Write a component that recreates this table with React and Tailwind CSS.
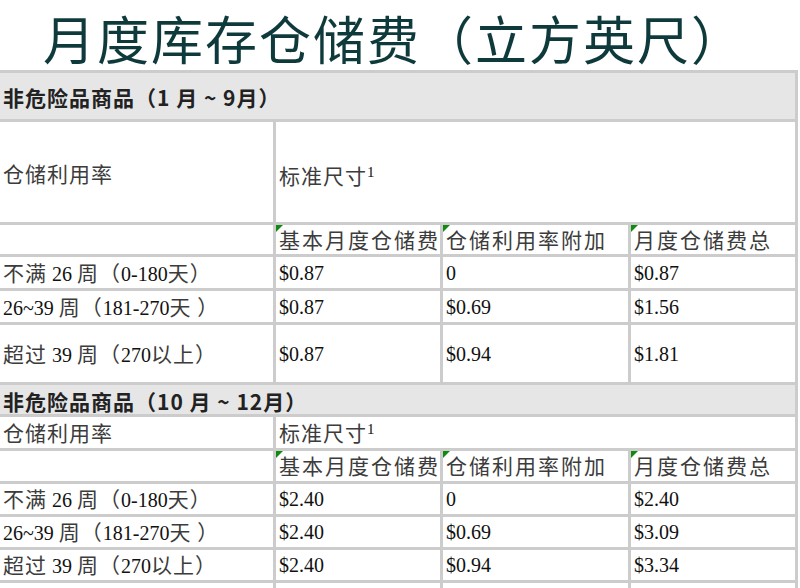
import React from "react";

const serif = { fontFamily: '"Liberation Serif", "Noto Sans CJK SC", serif' };

function C({ children, className = "" }) {
  return (
    <span
      className={"text-[21px] tracking-[1px] text-[#3c3c3c] " + className}
      style={{ fontFamily: '"Noto Sans CJK SC", sans-serif' }}
    >
      {children}
    </span>
  );
}

function Cell({ children, className = "", tri = false }) {
  return (
    <div
      className={
        "relative flex items-center bg-white pl-[3px] text-[20px] leading-none text-[#111] " +
        className
      }
      style={serif}
    >
      {tri && (
        <span className="absolute left-0 top-0 h-0 w-0 border-r-[7px] border-t-[7px] border-r-transparent border-t-[#118a11]" />
      )}
      <div className="whitespace-nowrap">{children}</div>
    </div>
  );
}

function Header({ children }) {
  return (
    <div
      className="col-span-4 flex items-center bg-[#e6e6e6] pl-[3px] pt-[3px] text-[21px] font-bold leading-none tracking-[1px] text-[#222]"
      style={{ fontFamily: '"Noto Sans CJK SC", sans-serif' }}
    >
      <span className="whitespace-nowrap">{children}</span>
    </div>
  );
}

function Rows({ data }) {
  return data.map((r, i) => (
    <React.Fragment key={i}>
      <Cell>{r[0]}</Cell>
      <Cell>{r[1]}</Cell>
      <Cell>{r[2]}</Cell>
      <Cell>{r[3]}</Cell>
    </React.Fragment>
  ));
}

const L1 = (
  <>
    <C>不满</C> 26 <C>周（</C>0-180<C>天）</C>
  </>
);
const L2 = (
  <>
    26~39 <C>周（</C>181-270<C>天 ）</C>
  </>
);
const L3 = (
  <>
    <C>超过</C> 39 <C>周（</C>270<C>以上）</C>
  </>
);

function Sub() {
  return (
    <>
      <Cell></Cell>
      <Cell tri>
        <C className="tracking-[2px]">基本月度仓储费</C>
      </Cell>
      <Cell tri>
        <C className="tracking-[2px]">仓储利用率附加</C>
      </Cell>
      <Cell tri>
        <C className="tracking-[2px]">月度仓储费总</C>
      </Cell>
    </>
  );
}

function Std() {
  return (
    <>
      <C>标准尺寸</C>
      <sup className="relative top-[-7px] text-[15px]">1</sup>
    </>
  );
}

export default function App() {
  return (
    <div className="min-h-[588px] w-[800px] overflow-hidden bg-white">
      <div
        className="h-[70px] pl-[43px] pt-[8px] text-[52px] leading-[60px] tracking-[2px] text-[#0f3a3c]"
        style={{ fontFamily: '"Noto Sans CJK SC", serif' }}
      >
        <span className="whitespace-nowrap font-normal">月度库存仓储费（立方英尺）</span>
      </div>
      <div className="w-[798px] bg-[#cccccc] pr-[3px] pt-[3px]">
        <div className="grid grid-cols-[273px_164px_185px_164px] grid-rows-[46px_100px_29px_31px_31px_57px_29px_31px_30px_30px_30px_30px_30px] gap-[3px]">
          <Header>非危险品商品（1 月 ~ 9月）</Header>
          <Cell className="pt-[4px]">
            <C>仓储利用率</C>
          </Cell>
          <Cell className="col-span-3 pt-[8px]">
            <Std />
          </Cell>
          <Sub />
          <Rows
            data={[
              [L1, "$0.87", "0", "$0.87"],
              [L2, "$0.87", "$0.69", "$1.56"],
              [L3, "$0.87", "$0.94", "$1.81"],
            ]}
          />
          <Header>非危险品商品（10 月 ~ 12月）</Header>
          <Cell>
            <C>仓储利用率</C>
          </Cell>
          <Cell className="col-span-3">
            <Std />
          </Cell>
          <Sub />
          <Rows
            data={[
              [L1, "$2.40", "0", "$2.40"],
              [L2, "$2.40", "$0.69", "$3.09"],
              [L3, "$2.40", "$0.94", "$3.34"],
            ]}
          />
          <Cell></Cell>
          <Cell></Cell>
          <Cell></Cell>
          <Cell></Cell>
        </div>
      </div>
    </div>
  );
}
